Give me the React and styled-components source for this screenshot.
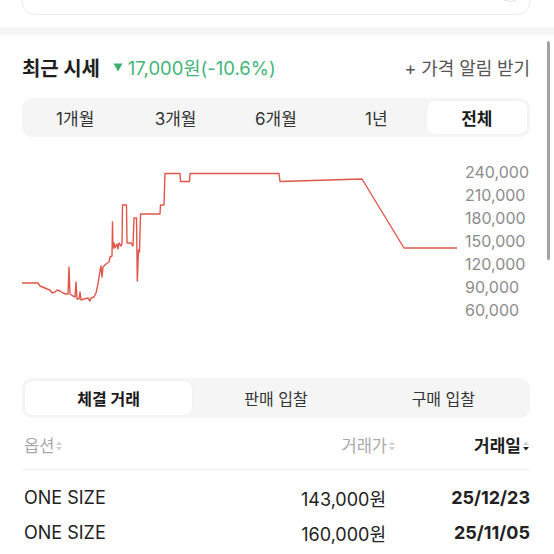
import styled, { createGlobalStyle } from 'styled-components';

const GlobalStyle = createGlobalStyle`
  html, body {
    margin: 0;
    padding: 0;
    background: #ffffff;
    overflow: hidden;
  }
  body {
    font-family: Inter, "Noto Sans CJK KR", "Noto Sans", sans-serif;
    color: #222;
  }
`;

const Page = styled.div`
  position: relative;
  width: 554px;
  height: 554px;
  overflow: hidden;
`;

const Padded = styled.div`
  padding: 0 24px 0 22px;
`;

const TopCard = styled.div`
  height: 56px;
  margin-top: -41px;
  box-sizing: border-box;
  border: 1px solid #ebebeb;
  border-radius: 12px;
  display: flex;
  align-items: flex-end;
  justify-content: flex-end;
  padding: 0 5px 12px;
`;

const RoundButton = styled.div`
  width: 28px;
  height: 28px;
  border-radius: 50%;
  border: 1px solid #e2e2e2;
  box-sizing: border-box;
`;

const Band = styled.div`
  height: 8px;
  margin-top: 12px;
  background: #f5f5f5;
`;

// scroll indicator sits over the content
const ScrollThumb = styled.div`
  position: absolute;
  right: 4px;
  top: 41px;
  width: 3.5px;
  height: 219px;
  border-radius: 2px;
  background: #a3a3a3;
`;

const TitleRow = styled.div`
  height: 30px;
  margin-top: 17px;
  display: flex;
  align-items: center;
  justify-content: space-between;
`;

const TitleLeft = styled.div`
  display: flex;
  align-items: center;
`;

const Title = styled.h2`
  margin: 0;
  font-size: 20px;
  font-weight: 700;
  color: #1f1f1f;
  letter-spacing: -0.1px;
`;

const Change = styled.span`
  display: flex;
  align-items: center;
  gap: 5px;
  margin-left: 13px;
  font-size: 18.5px;
  color: #41b57a;
`;

const AlertLink = styled.span`
  font-size: 18px;
  color: #555;
  letter-spacing: -0.1px;
`;

const Segmented = styled.div`
  display: grid;
  grid-template-columns: repeat(${(p) => p.count}, 1fr);
  height: ${(p) => p.height}px;
  margin-top: ${(p) => p.gap}px;
  padding: 3px;
  box-sizing: border-box;
  border-radius: 10px;
  background: #f5f5f5;
`;

const SegItem = styled.div`
  display: flex;
  align-items: center;
  justify-content: center;
  border-radius: 8px;
  font-size: ${(p) => p.size}px;
  font-weight: ${(p) => (p.active ? 700 : 400)};
  color: ${(p) => (p.active ? '#1a1a1a' : '#333')};
  background: ${(p) => (p.active ? '#ffffff' : 'transparent')};
  box-shadow: ${(p) => (p.active ? '0 0 2px rgba(0,0,0,0.04)' : 'none')};
`;

const ChartRow = styled.div`
  display: flex;
  height: 241px;
`;

const ChartSvg = styled.svg`
  width: 437px;
  height: 241px;
  flex: none;
`;

const AxisLabels = styled.div`
  display: flex;
  flex-direction: column;
  padding-top: 24px;
  margin-left: 6px;
`;

const AxisLabel = styled.span`
  font-size: 16px;
  line-height: 23px;
  color: #8c8c8c;
`;

const TableHeader = styled.div`
  display: grid;
  grid-template-columns: 1fr 120px 132px;
  margin-top: 10px;
  padding-bottom: 5px;
  line-height: 36px;
  border-bottom: 1px solid #efefef;
`;

const HeadCell = styled.div`
  display: flex;
  align-items: center;
  justify-content: ${(p) => (p.right ? 'flex-end' : 'flex-start')};
  padding-left: ${(p) => (p.right ? 0 : 2)}px;
  padding-right: ${(p) => p.pr || 0}px;
  font-size: ${(p) => (p.active ? 17 : 16.5)}px;
  font-weight: ${(p) => (p.active ? 700 : 400)};
  color: ${(p) => (p.active ? '#1d1d1d' : '#a8a8a8')};
`;

const Row = styled.div`
  display: grid;
  grid-template-columns: 1fr 120px 132px;
  height: 35px;
  align-items: center;
  margin-top: ${(p) => (p.first ? 10 : 0)}px;
`;

const Cell = styled.div`
  font-size: 18px;
  text-align: ${(p) => (p.right ? 'right' : 'left')};
  padding-left: ${(p) => (p.right ? 0 : 2)}px;
  padding-right: ${(p) => p.pr || 0}px;
  font-weight: ${(p) => (p.bold ? 700 : 400)};
  color: #222;
`;

const points = [
  [22, 283], [38, 283], [40, 286], [45, 288], [47, 289], [50, 290], [52, 293],
  [55, 292], [57, 290], [60, 291], [63, 293], [66, 294], [68, 294], [69, 267],
  [70, 294], [73, 296], [75, 297], [76, 282], [77, 299], [79, 299], [80, 292],
  [81, 300], [84, 299], [88, 298], [90, 301], [91, 298], [94, 297], [96, 293],
  [98, 284], [100, 271], [101, 266], [102, 277], [103, 267], [106, 264],
  [109, 262], [110, 257], [112, 256], [112.5, 222], [113, 248], [114, 243],
  [115, 248], [117, 244], [118, 249], [119, 243], [121, 246], [122, 244],
  [122.5, 205], [126.5, 205], [127, 243], [131, 243], [133, 246], [134, 218],
  [136.5, 218], [137.3, 281], [138.5, 250], [139.5, 252], [140.5, 214],
  [160, 214], [160.5, 205], [164, 205], [165, 173.5], [180, 173.5],
  [180.5, 181.5], [189.5, 181.5], [190, 173.5], [279, 173.5], [280, 181.5],
  [362, 179], [404, 248], [457, 248],
];

const periods = ['1개월', '3개월', '6개월', '1년', '전체'];
const tradeTabs = ['체결 거래', '판매 입찰', '구매 입찰'];
const axis = ['240,000', '210,000', '180,000', '150,000', '120,000', '90,000', '60,000'];
const trades = [
  { option: 'ONE SIZE', price: '143,000원', date: '25/12/23' },
  { option: 'ONE SIZE', price: '160,000원', date: '25/11/05' },
];

const SortIcon = ({ down = '#d0d0d0', up = '#d0d0d0' }) => (
  <svg width="8" height="12" viewBox="0 0 8 12" style={{ marginLeft: 1 }}>
    <path d="M4 1.5 L7 5 L1 5 Z" fill={up} />
    <path d="M4 10.5 L7 7 L1 7 Z" fill={down} />
  </svg>
);

const App = () => {
  return (
    <Page>
      <GlobalStyle />
      <Padded>
        <TopCard>
          <RoundButton />
        </TopCard>
      </Padded>
      <Band />
      <ScrollThumb />
      <Padded>
        <TitleRow>
          <TitleLeft>
            <Title>최근 시세</Title>
            <Change>
              <svg width="10" height="9" viewBox="0 0 10 9">
                <path d="M0.5 0.5 L9.5 0.5 L5 8.5 Z" fill="#3fae74" />
              </svg>
              17,000원(-10.6%)
            </Change>
          </TitleLeft>
          <AlertLink>+ 가격 알림 받기</AlertLink>
        </TitleRow>

        <Segmented count={5} height={39} gap={16}>
          {periods.map((p) => (
            <SegItem key={p} size={17} active={p === '전체'}>
              {p}
            </SegItem>
          ))}
        </Segmented>

        <ChartRow>
          <ChartSvg viewBox="22 137 437 241">
            <polyline
              points={points.map((pt) => pt.join(',')).join(' ')}
              fill="none"
              stroke="#e0574a"
              strokeWidth="1.4"
              strokeLinejoin="round"
            />
          </ChartSvg>
          <AxisLabels>
            {axis.map((a) => (
              <AxisLabel key={a}>{a}</AxisLabel>
            ))}
          </AxisLabels>
        </ChartRow>

        <Segmented count={3} height={40} gap={0}>
          {tradeTabs.map((t) => (
            <SegItem key={t} size={16} active={t === '체결 거래'}>
              {t}
            </SegItem>
          ))}
        </Segmented>

        <TableHeader>
          <HeadCell>
            옵션<SortIcon />
          </HeadCell>
          <HeadCell right pr={2}>
            거래가<SortIcon />
          </HeadCell>
          <HeadCell right active>
            거래일<SortIcon up="#cfcfcf" down="#222" />
          </HeadCell>
        </TableHeader>

        {trades.map((t, i) => (
          <Row key={i} first={i === 0}>
            <Cell>{t.option}</Cell>
            <Cell right pr={12}>{t.price}</Cell>
            <Cell right bold>{t.date}</Cell>
          </Row>
        ))}
      </Padded>
    </Page>
  );
};

export default App;
